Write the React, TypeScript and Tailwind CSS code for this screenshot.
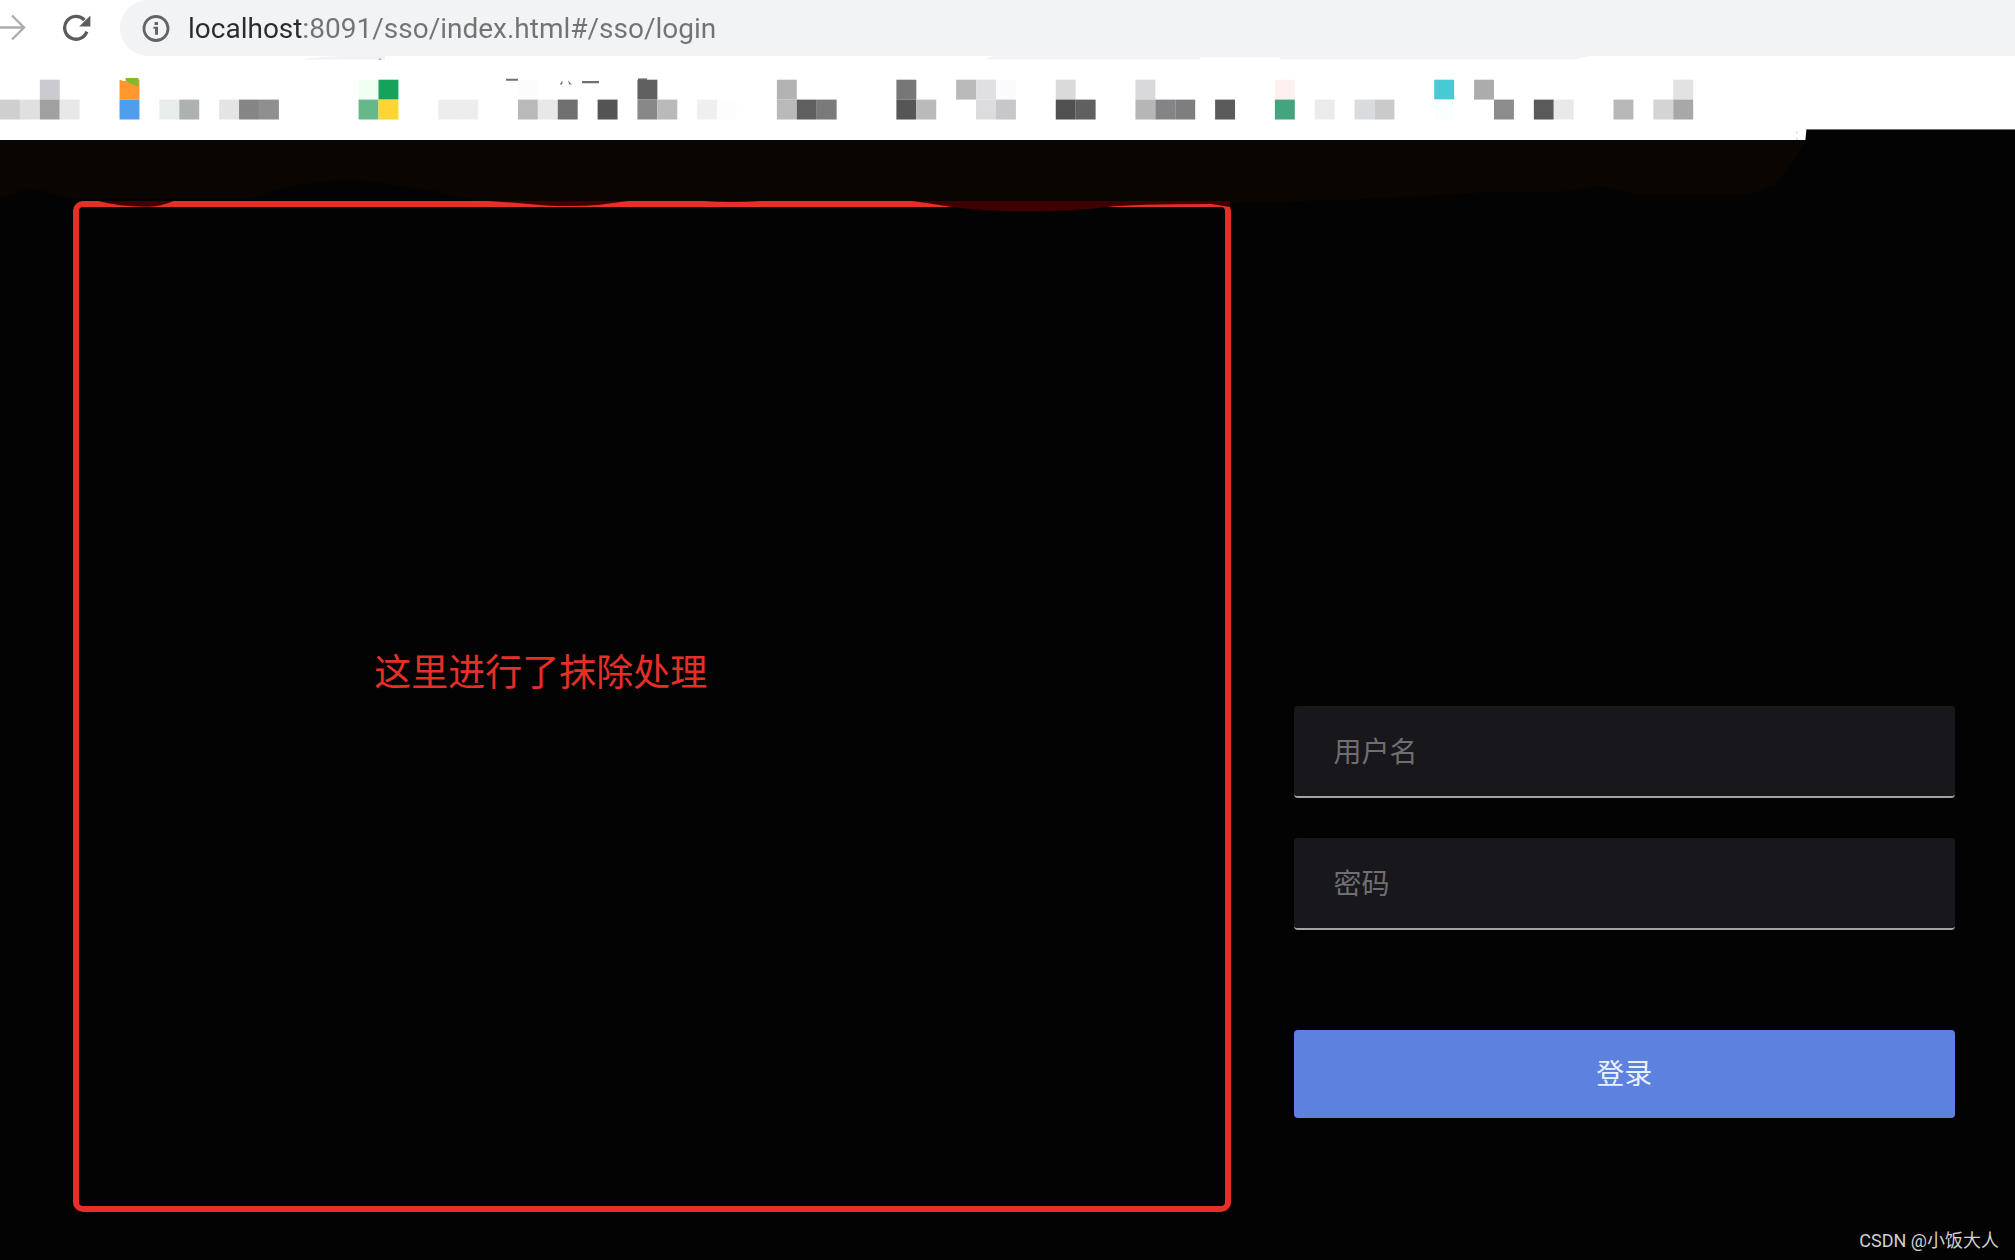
import type { ReactNode } from 'react';

// [column, row, color] of every block in the bookmarks mosaic
const blocks: [number, number, string][] = [
  [2, 0, '#cbcad0'], [6, 0, '#ff962e'], [18, 0, '#f0ffef'], [19, 0, '#17a25c'],
  [26, 0, '#fcfcfc'], [32, 0, '#606060'], [39, 0, '#b3b3b3'], [45, 0, '#777777'],
  [48, 0, '#b9b9b9'], [49, 0, '#e0dfe1'], [50, 0, '#fcfafc'], [53, 0, '#dadada'],
  [57, 0, '#d9d8da'], [64, 0, '#fdf0ef'], [72, 0, '#48c9d6'], [74, 0, '#acacac'],
  [84, 0, '#e2e2e2'],
  [0, 1, '#cfcfcf'], [1, 1, '#e0e0e0'], [2, 1, '#a0a0a0'], [3, 1, '#e8e8e8'],
  [6, 1, '#4f9eed'], [8, 1, '#e9ecec'], [9, 1, '#acb1b1'], [11, 1, '#e6e3e4'],
  [12, 1, '#858585'], [13, 1, '#8f8f8f'], [18, 1, '#66b88a'], [19, 1, '#ffd433'],
  [22, 1, '#ededed'], [23, 1, '#ededed'], [26, 1, '#b9b9b9'], [27, 1, '#e8e8e8'],
  [28, 1, '#707070'], [30, 1, '#545454'], [32, 1, '#888888'], [33, 1, '#b9b9b9'],
  [35, 1, '#efefef'], [36, 1, '#fdfdfd'], [39, 1, '#b9b9b9'], [40, 1, '#5f5f5f'],
  [41, 1, '#7a7a7a'], [45, 1, '#565656'], [46, 1, '#bababa'], [49, 1, '#dcdbdd'],
  [50, 1, '#c8c6ca'], [53, 1, '#505050'], [54, 1, '#606060'], [57, 1, '#b6b6b6'],
  [58, 1, '#868387'], [59, 1, '#7f7d80'], [61, 1, '#5b5c5a'], [64, 1, '#43a47d'],
  [66, 1, '#ecebec'], [68, 1, '#d8dcde'], [69, 1, '#cacaca'], [72, 1, '#f9ffff'],
  [75, 1, '#8c8c8c'], [77, 1, '#5a5a5a'], [78, 1, '#e9e9e9'], [81, 1, '#b8b8b8'],
  [83, 1, '#d2d5d4'], [84, 1, '#a8a8a8'],
];

const CELL = 19.92;

function ForwardIcon() {
  return (
    <svg width="26" height="28" viewBox="0 0 26 28" fill="none" stroke="#adadad" strokeWidth="2.4">
      <path d="M0 13.5H24M12 1.5L24 13.5L12 25.5" />
    </svg>
  );
}

function ReloadIcon() {
  return (
    <svg width="30" height="28" viewBox="0 0 30 28">
      <path d="M24.8 17.6A11.4 11.4 0 1 1 22.4 6" fill="none" stroke="#5c5c5c" strokeWidth="3.3" />
      <path d="M28.4 1.6V12.6H17.2Z" fill="#5c5c5c" />
    </svg>
  );
}

function InfoIcon() {
  return (
    <svg width="28" height="28" viewBox="0 0 28 28">
      <circle cx="14" cy="14.5" r="12" fill="none" stroke="#646464" strokeWidth="2.8" />
      <path d="M12.6 8h3.4v3h-3.4zM11.4 12.8h4.6v8h-3v-6h-1.6z" fill="#646464" />
    </svg>
  );
}

function BookmarksBar() {
  return (
    <svg viewBox="0 0 2015 84" className="block w-full bg-white" aria-hidden="true">
      <path d="M984 3.6L994 0H1590L1575 3.6H1280V1.5H1200V3.6Z" fill="#f1f3f8" />
      <path d="M300 3.6Q330 -1 385 0V3.6Z" fill="#eff1f4" />
      <path d="M378 3.6q2 -2 4 0z" fill="#888" />
      <g fill="#707070">
        <path d="M506 22.8h12v2h-12zM582 25h17v2.2h-17zM562.6 24.4l-3 4.2h2.6zM568 24.4l3.8 4.2h-2.6z" />
        <path d="M638 22.4h9v2h-9z" />
      </g>
      {blocks.map(([col, row, color]) => (
        <rect
          key={`${col}-${row}`}
          x={col * CELL}
          y={23.7 + row * 19.9}
          width={CELL}
          height={19.9}
          fill={color}
        />
      ))}
      <path d="M125.5 22h13v8.4q-8 -2 -13 -6.4z" fill="#7fba2c" />
      <path d="M119.5 23h6v2.2l-4 -.8z" fill="#fff" />
      <path d="M1806.4 73.5H2015V84H1805.4Z" fill="#040304" />
      <path d="M1806.4 73.5H2015" stroke="#6d756f" />
      <path d="M1797 75v9" stroke="#d5d5d5" strokeDasharray="3 3" />
    </svg>
  );
}

function Smudge() {
  return (
    <svg viewBox="0 0 2015 70" className="absolute inset-x-0 top-0 w-full" aria-hidden="true">
      <path
        d="M0 0H1806L1796 18L1775 45L1750 54H1635L1600 46L1560 52L1470 53L1350 60L1232 63L1000 62H480L430 50L350 39L290 46L250 59H75L30 48L0 58Z"
        fill="#0a0500"
      />
    </svg>
  );
}

// dark patches where the eraser went over the upper edge of the frame
function FrameWear() {
  return (
    <svg viewBox="0 0 1158 14" className="absolute -inset-x-[6px] -top-[6px]" aria-hidden="true">
      <g fill="#410000">
        <path d="M25 0Q45 5.4 75 5.8Q88 5.4 101 0Z" />
        <path d="M415 0Q448 2 470 4.2Q500 6 525 4L556 0Z" />
        <path d="M630 0Q660 2 690 0Z" />
        <path d="M840 0Q862 3 880 6Q920 11 960 10.5Q1010 9.5 1035 6Q1060 3 1140 3L1158 6V0Z" />
      </g>
    </svg>
  );
}

function Field({ id, type, label }: { id: string; type: string; label: string }) {
  return (
    <input
      id={id}
      type={type}
      aria-label={label}
      placeholder={label}
      className="block h-[92px] w-full rounded-sm border-b-2 border-[#a3a3a3] bg-[#18171b] px-10 pt-0.5 text-[28px] text-white outline-none placeholder:text-[#6f6e72]"
    />
  );
}

function Frame({ children }: { children: ReactNode }) {
  return (
    <section className="relative rounded-[10px] border-[6px] border-[#e63027] pt-[440px] pl-[25.5%]">
      <FrameWear />
      {children}
    </section>
  );
}

export default function App() {
  return (
    <div className="flex min-h-screen flex-col bg-[#040304] font-['Roboto','Noto_Sans_CJK_SC',sans-serif]">
      <header>
        <div className="flex h-14 items-center bg-white">
          <button type="button" aria-label="前进"><ForwardIcon /></button>
          <button type="button" aria-label="刷新" className="mr-7 ml-9"><ReloadIcon /></button>
          <div className="flex h-14 flex-1 items-center gap-[18px] rounded-l-full bg-[#f2f3f4] pl-[22px]">
            <InfoIcon />
            <input
              type="text"
              aria-label="地址"
              defaultValue="localhost:8091/sso/index.html#/sso/login"
              className="flex-1 bg-[linear-gradient(to_right,#2b2b2b_117px,#737373_117px)] bg-clip-text pt-0.5 text-[28px] text-transparent caret-black outline-none"
            />
          </div>
        </div>
        <BookmarksBar />
      </header>

      <main className="relative grid flex-1 grid-cols-[7fr_4fr] gap-[63px] pt-[61px] pr-[60px] pl-[73px]">
        <Smudge />
        <Frame>
          <p className="text-[37px] leading-[54px] text-[#e63027]">这里进行了抹除处理</p>
        </Frame>
        <form className="flex flex-col gap-10 self-end pb-[94px]" onSubmit={(e) => e.preventDefault()}>
          <Field id="username" type="text" label="用户名" />
          <Field id="password" type="password" label="密码" />
          <button
            type="submit"
            className="mt-[60px] h-[88px] rounded bg-[#5d81de] pt-0.5 text-[28px] text-[#e9f0ff]"
          >
            登录
          </button>
        </form>
      </main>

      <footer className="h-12 px-4 pt-[17px] text-right text-[18px] leading-6 text-[#d0d0d0]">
        CSDN @小饭大人
      </footer>
    </div>
  );
}
